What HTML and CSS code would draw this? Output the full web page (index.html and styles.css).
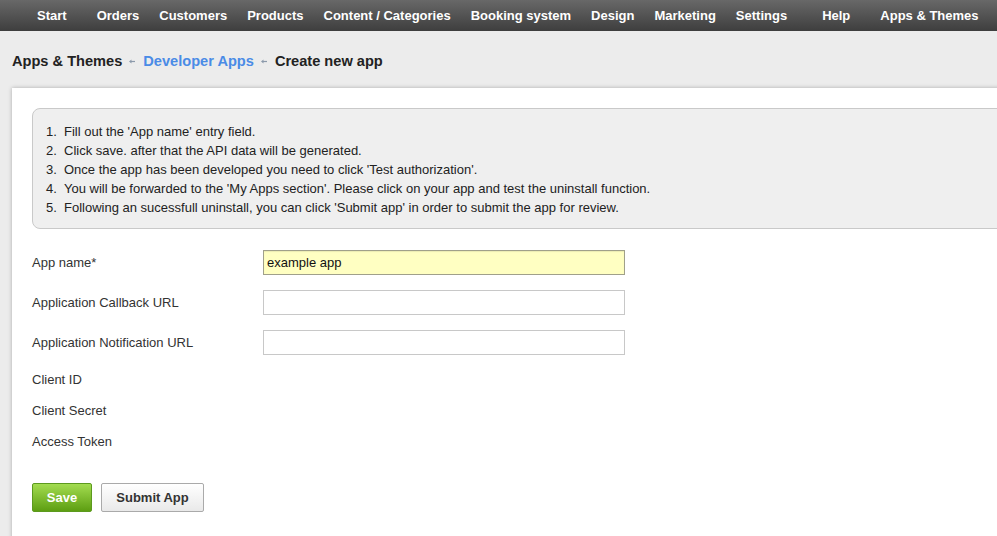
FILE: index.html
```html
<!DOCTYPE html>
<html>
<head>
<meta charset="utf-8">
<link rel="stylesheet" href="styles.css">
</head>
<body>
<nav class="topnav">
  <a class="nav-item gap-after-10">Start</a>
  <a class="nav-item">Orders</a>
  <a class="nav-item">Customers</a>
  <a class="nav-item">Products</a>
  <a class="nav-item">Content / Categories</a>
  <a class="nav-item">Booking system</a>
  <a class="nav-item">Design</a>
  <a class="nav-item">Marketing</a>
  <a class="nav-item gap-after-15">Settings</a>
  <a class="nav-item gap-after-10">Help</a>
  <a class="nav-item">Apps &amp; Themes</a>
</nav>

<div class="breadcrumb">
  <span class="crumb">Apps &amp; Themes</span>
  <svg class="sep" width="6" height="7" viewBox="0 0 6 7"><path d="M0 3.5 L2.5 1.5 L2.5 5.5 Z" fill="#8c9aab"/><path d="M2 3.5 H6" stroke="#8c9aab" stroke-width="1.2"/></svg>
  <span class="crumb link">Developer Apps</span>
  <svg class="sep" width="6" height="7" viewBox="0 0 6 7"><path d="M0 3.5 L2.5 1.5 L2.5 5.5 Z" fill="#8c9aab"/><path d="M2 3.5 H6" stroke="#8c9aab" stroke-width="1.2"/></svg>
  <span class="crumb">Create new app</span>
</div>

<main class="panel">
  <div class="info-box">
    <ol class="steps">
      <li>Fill out the 'App name' entry field.</li>
      <li>Click save. after that the API data will be generated.</li>
      <li>Once the app has been developed you need to click 'Test authorization'.</li>
      <li>You will be forwarded to the 'My Apps section'. Please click on your app and test the uninstall function.</li>
      <li>Following an sucessfull uninstall, you can click 'Submit app' in order to submit the app for review.</li>
    </ol>
  </div>

  <form class="form">
    <div class="row input-row">
      <label class="label">App name*</label>
      <input class="field field-active" type="text" value="example app">
    </div>
    <div class="row input-row">
      <label class="label">Application Callback URL</label>
      <input class="field" type="text" value="">
    </div>
    <div class="row input-row">
      <label class="label">Application Notification URL</label>
      <input class="field" type="text" value="">
    </div>
    <div class="row text-row"><span class="label">Client ID</span></div>
    <div class="row text-row"><span class="label">Client Secret</span></div>
    <div class="row text-row"><span class="label">Access Token</span></div>

    <div class="buttons">
      <button type="button" class="btn btn-save">Save</button>
      <button type="button" class="btn btn-submit">Submit App</button>
    </div>
  </form>
</main>
</body>
</html>
```

FILE: styles.css
```css
html, body {
  margin: 0;
  padding: 0;
}
body {
  background: #ececec;
  font-family: "Liberation Sans", Arial, Helvetica, sans-serif;
  color: #333;
  overflow: hidden;
  width: 997px;
  height: 536px;
}

.topnav {
  height: 31px;
  background: linear-gradient(#686868, #3e3e3e);
  display: flex;
  align-items: center;
  gap: 20px;
  padding-left: 37px;
  box-sizing: border-box;
}
.nav-item {
  color: #fff;
  font-weight: bold;
  font-size: 13px;
  line-height: 31px;
  white-space: nowrap;
}
.gap-after-10 { margin-right: 10px; }
.gap-after-15 { margin-right: 15px; }

.breadcrumb {
  display: flex;
  align-items: center;
  margin: 20px 0 0 12px;
  height: 20px;
}
.crumb {
  font-size: 14.6px;
  font-weight: bold;
  color: #222;
  line-height: 20px;
}
.crumb.link {
  color: #4a8be6;
}
.sep {
  margin: 0 8px 0 7px;
}

.panel {
  margin: 17px 0 0 12px;
  width: 1020px;
  height: 470px;
  background: #fff;
  box-shadow: 0 0 4px rgba(0, 0, 0, 0.28);
  padding: 20px 0 0 20px;
  box-sizing: border-box;
}

.info-box {
  background: #efefef;
  border: 1px solid #c9c9c9;
  border-radius: 8px;
  padding: 13px 0 11px 0;
}
.steps {
  margin: 0;
  padding-left: 31px;
  font-size: 13px;
  line-height: 19px;
  color: #222;
}
.steps li::marker {
  content: counter(list-item) ".  ";
}

.form {
  margin-top: 21px;
}
.row {
  display: grid;
  grid-template-columns: 231px 362px;
  align-items: center;
}
.input-row {
  height: 25px;
  margin-bottom: 15px;
}
.text-row {
  height: 20px;
  margin-bottom: 11px;
}
.label {
  font-size: 13px;
  color: #333;
  line-height: 20px;
}
.field {
  box-sizing: border-box;
  width: 362px;
  height: 25px;
  border: 1px solid #c8c8c8;
  background: #fff;
  font-family: "Liberation Sans", Arial, sans-serif;
  font-size: 13px;
  color: #111;
  padding: 0 3px;
  margin: 0;
  outline: none;
}
.field-active {
  background: #ffffc2;
  border-color: #a0a08a;
  box-shadow: inset 0 1px 1px rgba(0,0,0,0.08);
}

.buttons {
  display: flex;
  gap: 9px;
  margin-top: 31px;
}
.btn {
  height: 29px;
  font-family: "Liberation Sans", Arial, sans-serif;
  font-size: 13px;
  font-weight: bold;
  border-radius: 2px;
  padding: 0;
  margin: 0;
  cursor: pointer;
}
.btn-save {
  width: 60px;
  color: #fff;
  background: linear-gradient(#a3dc50, #5d9e12);
  border: 1px solid #5c9a1e;
}
.btn-submit {
  width: 103px;
  color: #333;
  background: linear-gradient(#ffffff, #e9e9e9);
  border: 1px solid #aaa;
}
```
